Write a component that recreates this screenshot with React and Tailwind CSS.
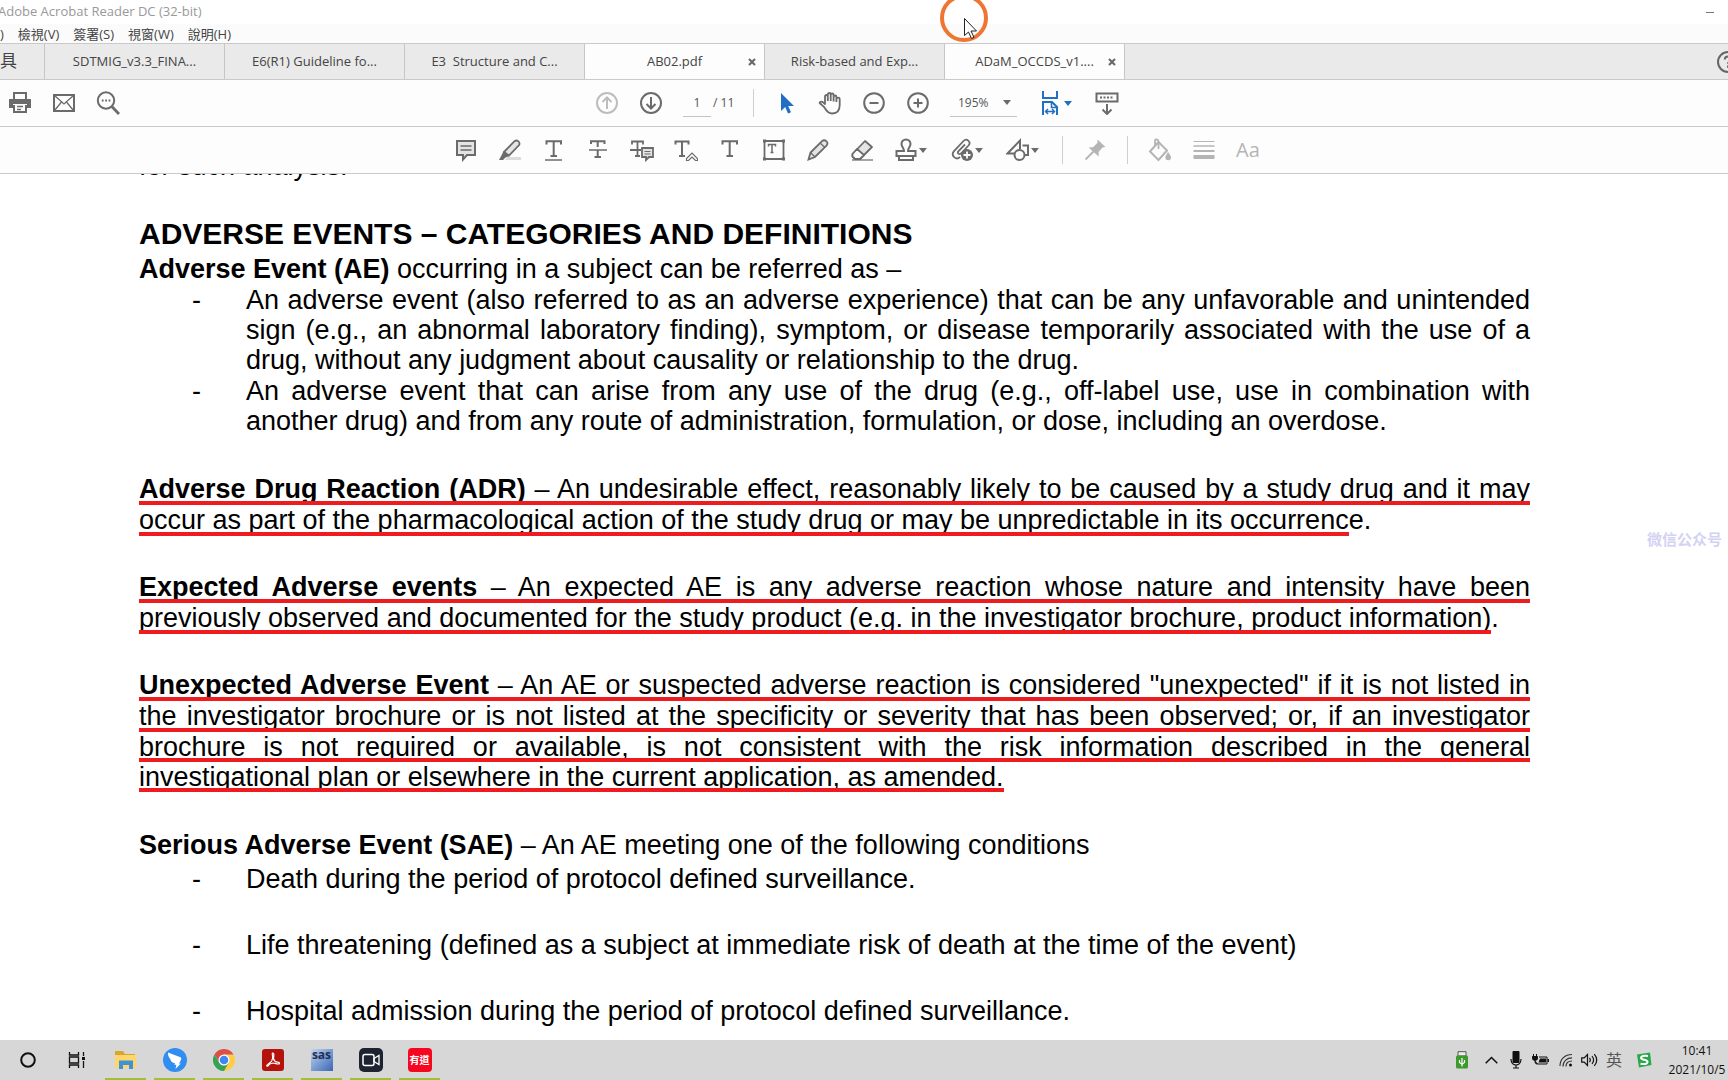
import React from "react";

const UI = "font-['Open_Sans','Noto_Sans_CJK_TC',sans-serif]";

function Icon({ children, className = "text-[#6b6b6b]", sw = 2 }) {
  return (
    <svg
      width="24"
      height="24"
      viewBox="0 0 24 24"
      fill="none"
      stroke="currentColor"
      strokeWidth={sw}
      className={`shrink-0 ${className}`}
      aria-hidden="true"
    >
      {children}
    </svg>
  );
}

function Caret({ className = "text-[#6b6b6b]" }) {
  return (
    <svg width="8" height="5" viewBox="0 0 8 5" className={`shrink-0 ${className}`} aria-hidden="true">
      <path d="M0 0h8L4 5z" fill="currentColor" />
    </svg>
  );
}

function Tool({ label, children }) {
  return (
    <button type="button" aria-label={label} className="flex h-11 w-11 items-center justify-center">
      {children}
    </button>
  );
}

function MenuTool({ label, children }) {
  return (
    <button type="button" aria-label={label} className="flex h-11 w-14 items-center gap-px pl-2.5">
      {children}
      <Caret />
    </button>
  );
}

function Divider({ className = "mx-2.5" }) {
  return <div className={`h-7 w-px bg-[#cfcfcf] ${className}`} />;
}

/* ---------- title, menu and tabs ---------- */

const menus = [")", "檢視(V)", "簽署(S)", "視窗(W)", "說明(H)"];

const tabs = [
  { name: "SDTMIG_v3.3_FINA..." },
  { name: "E6(R1) Guideline fo..." },
  { name: "E3\u00a0 Structure and C..." },
  { name: "AB02.pdf", active: true, close: true },
  { name: "Risk-based and Exp..." },
  { name: "ADaM_OCCDS_v1....", active: true, close: true },
];

function Tab({ name, active, close }) {
  return (
    <div
      className={`relative flex w-[180px] items-center justify-center border-l border-[#c6c6c6] ${
        active ? "bg-[#fdfdfd]" : ""
      }`}
    >
      <button type="button" className="whitespace-nowrap text-[13px] text-[#444]">
        {name}
      </button>
      {close && (
        <button type="button" aria-label={`Close ${name}`} className="absolute right-1 flex h-4 w-4 items-center justify-center">
          <svg width="8" height="8" viewBox="0 0 8 8" stroke="#666" strokeWidth="2" aria-hidden="true">
            <path d="M1 1l6 6M7 1L1 7" />
          </svg>
        </button>
      )}
    </div>
  );
}

function Header() {
  return (
    <header className={UI}>
      <div className="flex h-6 items-center justify-between bg-white pr-3">
        <h1 className="-ml-0.5 whitespace-nowrap text-[13px] text-[#999]">Adobe Acrobat Reader DC (32-bit)</h1>
        <button type="button" aria-label="Minimize" className="flex h-4 w-3 items-center justify-center">
          <span className="h-px w-2 bg-[#777]" />
        </button>
      </div>
      <nav className="flex h-[19px] items-center gap-3.5 bg-[#fbfbfb]">
        {menus.map((m) => (
          <button key={m} type="button" className="whitespace-nowrap text-[13px] leading-4 text-[#444]">
            {m}
          </button>
        ))}
      </nav>
      <div className="flex h-[37px] border-y border-[#cacaca] bg-[#eaeaea]">
        <button type="button" className="w-11 pb-0.5 text-left text-[17px] leading-8 text-[#444]">
          具
        </button>
        {tabs.map((t) => (
          <Tab key={t.name} {...t} />
        ))}
        <div className="flex flex-1 items-center justify-end overflow-hidden border-l border-[#c6c6c6]">
          <button type="button" aria-label="Help" className="-mr-3">
            <svg width="24" height="24" viewBox="0 0 24 24" fill="none" stroke="#666" strokeWidth="2" aria-hidden="true">
              <circle cx="12" cy="12" r="10" />
              <path d="M8.800 9.400c0-2 1.400-3 3.200-3s3.200 1.100 3.200 2.800c0 2.200-3.200 2.300-3.200 4.600M12 15.600v2.200" />
            </svg>
          </button>
        </div>
      </div>
    </header>
  );
}

/* ---------- toolbars ---------- */

const blue = "text-[#1f6fc4]";
const pale = "text-[#b4b4b4]";

function MainToolbar() {
  return (
    <div className={`flex h-[47px] items-center border-b border-[#cacaca] bg-[#fdfdfd] pr-3 ${UI}`}>
      <div className="-ml-0.5 flex flex-1">
        <Tool label="Print">
          <Icon>
            <path d="M6 8V2h12v6M6 14v7h12v-7" />
            <path d="M1 8h22v9h-4v-4H5v4H1z" fill="currentColor" stroke="none" />
            <path d="M9 15.500h6M9 18.500h4" strokeWidth="1.300" />
          </Icon>
        </Tool>
        <Tool label="Email">
          <Icon>
            <path d="M2 4h20v16H2z" />
            <path d="M2.500 4.500L12 13l9.500-8.500M2.500 19.500L9.500 11M21.500 19.500L14.500 11" strokeWidth="1.300" />
          </Icon>
        </Tool>
        <Tool label="Find">
          <Icon>
            <circle cx="10" cy="9.500" r="8.200" />
            <path d="M15.800 15.500L23 23" strokeWidth="2.800" />
            <path d="M5.800 9.500h8.600" strokeWidth="1.800" strokeDasharray="1.800 1.600" />
          </Icon>
        </Tool>
      </div>

      <div className="flex items-center">
        <Tool label="Previous page">
          <Icon className="text-[#bdbdbd]">
            <circle cx="12" cy="12" r="10" />
            <path d="M12 18V6.500M7.500 11L12 6.500l4.500 4.500" />
          </Icon>
        </Tool>
        <Tool label="Next page">
          <Icon>
            <circle cx="12" cy="12" r="10" />
            <path d="M12 6v11.500M7.500 13l4.500 4.500 4.500-4.500" />
          </Icon>
        </Tool>
        <input
          aria-label="Page number"
          defaultValue="1"
          className="ml-2.5 h-7 w-7 border-b border-[#c4c4c4] bg-transparent text-center text-xs text-[#555] outline-none"
        />
        <span className="ml-0.5 w-6 whitespace-nowrap text-xs text-[#555]">/ 11</span>
        <Divider className="ml-4 mr-2.5" />
        <Tool label="Select">
          <Icon className={blue}>
            <path d="M7 2v18l4.200-4 2.800 6.500 3-1.300-2.800-6.200H20z" fill="currentColor" stroke="none" />
          </Icon>
        </Tool>
        <Tool label="Hand">
          <Icon sw={1.8}>
            <path d="M6.500 16.500C4.500 14.500 2.600 13 1.600 11.800c.6-1.600 2.600-1.400 3.800-.2L7 13V5.500c0-2 2.800-2 2.800 0V10M9.800 10V3.500c0-2 2.900-2 2.900 0V10M12.700 10V4c0-2 2.900-2 2.900 0v6.500M15.600 10.500V6c0-2 2.800-2 2.800 0v3M18.400 11V8c0-1.900 3.300-1.900 3.300 0v6c0 5-2.500 8.500-7.500 8.500-4.200 0-5.800-2.500-7.700-6" strokeLinejoin="round" />
          </Icon>
        </Tool>
        <Tool label="Zoom out">
          <Icon>
            <circle cx="12" cy="12" r="9.800" />
            <path d="M7.500 12h9" />
          </Icon>
        </Tool>
        <Tool label="Zoom in">
          <Icon>
            <circle cx="12" cy="12" r="9.800" />
            <path d="M7.500 12h9M12 7.500v9" />
          </Icon>
        </Tool>
        <div className="ml-2.5 flex h-7 w-[67px] items-center border-b border-[#c4c4c4] pr-1.5">
          <select aria-label="Zoom level" className="w-full appearance-none bg-transparent pl-2 text-xs text-[#555] outline-none">
            <option>195%</option>
          </select>
          <Caret />
        </div>
        <button type="button" aria-label="Fit width" className="ml-3 flex h-11 w-12 items-center gap-px pl-2.5">
          <Icon className={blue}>
            <path d="M4 0v7h14V0" />
            <path d="M4 24V11h9l5 5v8" />
            <path d="M12.500 11v5.500H18" strokeWidth="1.500" />
            <path d="M6.500 20.500h9M9 18l-2.500 2.500L9 23M13 18l2.500 2.500L13 23" strokeWidth="1.500" />
          </Icon>
          <Caret className={blue} />
        </button>
        <div className="ml-2">
          <Tool label="Show toolbar below">
            <Icon>
              <path d="M1.500 2.500h21v8h-21z" />
              <path d="M5 6.500h14" strokeDasharray="2 1.500" strokeWidth="1.800" />
              <path d="M12 13v10M7.500 18.500L12 23l4.500-4.500" />
            </Icon>
          </Tool>
        </div>
      </div>
      <div className="flex-1" />
    </div>
  );
}

/* Serifed T shared by the text-markup tools */
const tee = "M4.500 6.500V3.200h14.500v3.300M11.700 3.200V18M8.500 18h6.500";

function CommentToolbar() {
  return (
    <div className={`flex h-[47px] items-center justify-center border-b border-[#cacaca] bg-[#fdfdfd] pr-3.5 ${UI}`}>
      <Tool label="Sticky note">
        <Icon>
          <path d="M3 3h18v14h-8l-4 4.500V17H3z" fill="#e4e4e4" />
          <path d="M6.500 8h11M6.500 12h11" strokeWidth="1.500" />
        </Icon>
      </Tool>
      <Tool label="Highlight">
        <Icon>
          <path d="M9 19h14v3H7z" fill="#dcdcdc" stroke="none" />
          <path d="M6 14L16.500 3.200c2.500-1.800 5.800.4 4.800 3.600L11 17.500z" fill="#e4e4e4" strokeWidth="1.800" />
          <path d="M5.500 13.500l6 4.500-4 1.500L5 22H1z" fill="currentColor" stroke="none" />
        </Icon>
      </Tool>
      <Tool label="Underline text">
        <Icon>
          <path d={tee} />
          <path d="M3 22h17" strokeWidth="1.500" />
        </Icon>
      </Tool>
      <Tool label="Strike through text">
        <Icon>
          <path d="M5 6V3.200h13.500V6M11.700 3.200V9M11.700 12v7M8.500 19h6.500" />
          <path d="M3 12h18" strokeWidth="1.500" />
        </Icon>
      </Tool>
      <Tool label="Replace text">
        <Icon>
          <path d="M2 6.500V3.500h11v3M7.500 3.500V18M5 18h5M0 12h11" strokeWidth="1.800" />
          <path d="M12 10h11v9h-4l-3 3v-3h-4z" fill="#e4e4e4" strokeWidth="1.800" />
          <path d="M14.500 13.500h6M14.500 16h6" strokeWidth="1" />
        </Icon>
      </Tool>
      <Tool label="Insert text">
        <Icon>
          <path d="M1.500 6.500V3.500h13v3M8 3.500V18M5 18h6" />
          <path d="M12.500 22.500v-2L18 15l5.500 5.500v2h-2L18 19l-3.500 3.500z" strokeWidth="1.200" />
        </Icon>
      </Tool>
      <Tool label="Add text">
        <Icon>
          <path d={tee} />
        </Icon>
      </Tool>
      <Tool label="Text box">
        <Icon>
          <path d="M2.500 3h19v18h-19z" strokeWidth="1.800" />
          <path d="M1 1.500h3v3H1zM20 1.500h3v3h-3zM1 19.500h3v3H1zM20 19.500h3v3h-3z" fill="currentColor" stroke="none" />
          <path d="M6.500 8.500V6.500h7v2M10 6.500v8M8.500 14.500h3" strokeWidth="1.500" />
        </Icon>
      </Tool>
      <Tool label="Pencil">
        <Icon sw={1.8}>
          <path d="M2.500 21.500l2-7L16 3.200c1.500-1.400 3-1.200 4.300 0 1.400 1.400 1.500 3 .2 4.400L9 19z" fill="#e4e4e4" />
          <path d="M14 5l5 4.500M4.500 14.500L9 19" strokeWidth="1.300" />
        </Icon>
      </Tool>
      <Tool label="Eraser">
        <Icon sw={1.8}>
          <path d="M2.500 16L15 3l7 6L10 21H5l-2.500-2.500z" fill="#e4e4e4" strokeLinejoin="round" />
          <path d="M2.500 16L7 11l7 6-4 4H5l-2.500-2.500z" fill="#fdfdfd" strokeLinejoin="round" />
          <path d="M2 22h21" strokeWidth="1.200" />
        </Icon>
      </Tool>
      <MenuTool label="Stamp">
        <Icon>
          <path d="M10 13c.2-3-2.500-4-2.500-7a4.500 4.500 0 019 0c0 3-2.700 4-2.500 7h7.500v5h-19v-5z" />
          <path d="M5 18v4h14v-4" />
        </Icon>
      </MenuTool>
      <MenuTool label="Attach file">
        <Icon>
          <path d="M10 19c-2 1.800-4.500 1.600-6 0-1.700-1.700-1.500-4 0-5.800L13.500 3c1.500-1.600 3.600-1.500 5-.2s1.300 3.200 0 4.700L11 15.500c-2 1.500-4-.4-2.700-2.200L15 6.500" strokeWidth="1.800" />
          <circle cx="17" cy="17" r="6" fill="currentColor" stroke="none" />
          <path d="M17 13.500v7M13.500 17h7" stroke="#fff" strokeWidth="1.800" />
        </Icon>
      </MenuTool>
      <MenuTool label="Drawing tools">
        <Icon>
          <path d="M8 15.500H1.500L14 2.500V11M16.500 7.500H22v9.500h-3" />
          <circle cx="13.500" cy="17" r="5" />
        </Icon>
      </MenuTool>
      <Divider />
      <Tool label="Keep tool selected">
        <Icon className={pale}>
          <path d="M14.500 1.500L22.500 9l-3 .5-4 4.500.3 4.500L5.500 9.500l4.500-.3 4.500-4.500z" fill="currentColor" stroke="none" />
          <path d="M10.500 13.500L2.500 21.500" strokeWidth="1.800" />
        </Icon>
      </Tool>
      <Divider />
      <Tool label="Fill color">
        <Icon className={pale}>
          <path d="M2 13.500L10.500 4l8.500 8.500L10.500 22z" />
          <path d="M7 8V2.500c0-1.500 3.500-1.500 3.500 1V11" strokeWidth="1.800" />
          <path d="M20 14c2 2.500 3 4 3 5.500a2.800 2.800 0 01-5.600 0c0-1.500 1-3 2.600-5.500z" fill="currentColor" stroke="none" />
        </Icon>
      </Tool>
      <Tool label="Line thickness">
        <Icon className={pale}>
          <path d="M1.500 3.500h21" strokeWidth="1" />
          <path d="M1.500 8h21" strokeWidth="1.500" />
          <path d="M1.500 13h21" strokeWidth="2" />
          <path d="M1.500 19h21" strokeWidth="4" />
        </Icon>
      </Tool>
      <button type="button" aria-label="Text properties" className="h-11 w-11 text-xl leading-none text-[#b4b4b4]">
        Aa
      </button>
    </div>
  );
}

/* ---------- document ---------- */

/* One line of marked text: the red rule covers the descenders. */
function Marked({ children, fill, tight, rest }) {
  const line = (
    <span
      className={`block overflow-hidden whitespace-nowrap border-b-4 border-[#ee1c1f] ${tight ? "h-[30px]" : "h-[31px]"} ${
        fill ? "w-full text-justify [text-align-last:justify]" : ""
      }`}
    >
      {children}
    </span>
  );
  return (
    <span className="flex">
      {line}
      {rest && <span>{rest}</span>}
    </span>
  );
}

function Bullet({ children, className = "" }) {
  return (
    <li className={`flex ${className}`}>
      <span className="w-[54px] shrink-0">-</span>
      <span className="flex-1 text-justify">{children}</span>
    </li>
  );
}

function Document() {
  return (
    <main className="relative flex-1 overflow-hidden bg-white font-['Liberation_Sans',Arial,sans-serif] text-[27px] leading-[30px] text-black">
      <article className="-mt-[23px] ml-[139px] mr-[198px]">
        <p>for such analysis.</p>
        <h2 className="mb-0.5 mt-[35px] text-[30px] font-bold leading-9">ADVERSE EVENTS – CATEGORIES AND DEFINITIONS</h2>
        <p className="leading-[31px]">
          <b>Adverse Event (AE)</b> occurring in a subject can be referred as –
        </p>
        <ul className="ml-[53px]">
          <Bullet>
            An adverse event (also referred to as an adverse experience) that can be any unfavorable and unintended sign
            (e.g., an abnormal laboratory finding), symptom, or disease temporarily associated with the use of a drug,
            without any judgment about causality or relationship to the drug.
          </Bullet>
          <Bullet className="mt-px">
            An adverse event that can arise from any use of the drug (e.g., off-label use, use in combination with another
            drug) and from any route of administration, formulation, or dose, including an overdose.
          </Bullet>
        </ul>
        <p className="mt-[38px]">
          <Marked fill>
            <b>Adverse Drug Reaction (ADR)</b> – An undesirable effect, reasonably likely to be caused by a study drug and
            it may
          </Marked>
          <Marked rest="e.">
            occur as part of the pharmacological action of the study drug or may be unpredictable in its occurrenc
          </Marked>
        </p>
        <p className="mt-9">
          <Marked fill>
            <b>Expected Adverse events</b> – An expected AE is any adverse reaction whose nature and intensity have been
          </Marked>
          <Marked rest=".">
            previously observed and documented for the study product (e.g. in the investigator brochure, product
            information)
          </Marked>
        </p>
        <p className="mt-9">
          <Marked fill>
            <b>Unexpected Adverse Event</b> – An AE or suspected adverse reaction is considered "unexpected" if it is not
            listed in
          </Marked>
          <Marked fill>
            the investigator brochure or is not listed at the specificity or severity that has been observed; or, if an
            investigator
          </Marked>
          <Marked fill tight>
            brochure is not required or available, is not consistent with the risk information described in the general
          </Marked>
          <Marked tight>investigational plan or elsewhere in the current application, as amended.</Marked>
        </p>
        <p className="mt-[38px]">
          <b>Serious Adverse Event (SAE)</b> – An AE meeting one of the following conditions
        </p>
        <ul className="ml-[53px] mt-1 flex flex-col gap-9">
          <Bullet>Death during the period of protocol defined surveillance.</Bullet>
          <Bullet>Life threatening (defined as a subject at immediate risk of death at the time of the event)</Bullet>
          <Bullet>Hospital admission during the period of protocol defined surveillance.</Bullet>
        </ul>
      </article>
      <span className="absolute right-1.5 top-[354px] font-['Noto_Sans_CJK_SC',sans-serif] text-[15px] font-bold leading-[22px] text-[#d3d2f3]">
        微信公众号
      </span>
    </main>
  );
}

/* ---------- taskbar ---------- */

function TaskButton({ label, running, children }) {
  return (
    <button type="button" aria-label={label} className="relative flex h-10 w-[49px] items-center justify-center">
      {children}
      {running && <span className="absolute inset-x-1 bottom-0 h-0.5 bg-[#a2c037]" />}
    </button>
  );
}

function Taskbar() {
  return (
    <footer className={`flex h-10 items-center justify-between bg-[#d7d7d7] ${UI}`}>
      <div className="flex items-center pl-[3px]">
        <TaskButton label="Cortana">
          <svg width="16" height="16" viewBox="0 0 16 16" fill="none" stroke="#111" strokeWidth="2" aria-hidden="true">
            <circle cx="8" cy="8" r="6.800" />
          </svg>
        </TaskButton>
        <TaskButton label="Task view">
          <svg width="18" height="16" viewBox="0 0 18 16" fill="none" stroke="#111" strokeWidth="1.300" aria-hidden="true">
            <path d="M1.500 0v3h9V0M1.500 16v-3h9v3M1.500 5h9v6h-9zM15.500 0v4M15.500 9v7" />
            <path d="M14 5h3v3h-3z" fill="#111" stroke="none" />
          </svg>
        </TaskButton>
        <TaskButton label="File Explorer" running>
          <svg width="24" height="24" viewBox="0 0 24 24" aria-hidden="true">
            <path d="M1 3h8l2 3h10v14H1z" fill="#d9a72c" />
            <path d="M1 7h21v13H1z" fill="#ffd66b" />
            <path d="M5 21v-8.500h14V21h-4v-4h-6v4z" fill="#3f93d3" />
          </svg>
        </TaskButton>
        <TaskButton label="DingTalk" running>
          <svg width="24" height="24" viewBox="0 0 24 24" aria-hidden="true">
            <circle cx="12" cy="12" r="12" fill="#2f8ef0" />
            <path d="M5 4.500l12.500 4.800c1.500.8.600 2.500-.200 4l-1.300 2.200h1.800L12.500 21l.8-4.200h-2l.8-1.600C8.500 14.500 7.500 12.500 7.300 11c-1.500-1.500-2.500-4-2.300-6.500z" fill="#fff" />
          </svg>
        </TaskButton>
        <TaskButton label="Chrome" running>
          <svg width="22" height="22" viewBox="0 0 24 24" aria-hidden="true">
            <path d="M12 12V24A12 12 0 0022.400 6H12z" fill="#ffcd46" />
            <path d="M12 6h10.400A12 12 0 001.600 6l5.200 9z" fill="#dd5144" />
            <path d="M1.600 6A12 12 0 0012 24l5.200-9H6.800z" fill="#34a353" />
            <circle cx="12" cy="12" r="6" fill="#fff" />
            <circle cx="12" cy="12" r="4.700" fill="#4285f4" />
          </svg>
        </TaskButton>
        <TaskButton label="Acrobat Reader" running>
          <svg width="22" height="22" viewBox="0 0 22 22" aria-hidden="true">
            <rect width="22" height="22" rx="3" fill="#b3130b" />
            <path d="M10.600 4c1.600-.3 1.400 3 .8 5.500C12 11.500 14 13 15.500 13.200c2 0 3 1.800.8 1.800-2 0-4-.9-5.300-1-1.800.2-3.600.9-4.800 2.600-1 1.400-2.200.3-.7-1C7 14 8.800 13.500 9.700 12c1-2 1.200-3.800.8-5.300-.3-1-.4-2.500.1-2.700z" fill="none" stroke="#fff" strokeWidth="1.200" />
          </svg>
        </TaskButton>
        <TaskButton label="SAS" running>
          <span className="flex h-[22px] w-[22px] items-start justify-center bg-linear-to-br from-[#c3d6ee] to-[#3a66b4] text-xs font-bold leading-3 text-[#1f2f55]">
            sas
          </span>
        </TaskButton>
        <TaskButton label="Screen recorder" running>
          <svg width="24" height="24" viewBox="0 0 24 24" aria-hidden="true">
            <rect width="24" height="24" rx="5" fill="#1d2330" />
            <rect x="4" y="6.500" width="11" height="11" rx="2" fill="none" stroke="#fff" strokeWidth="1.500" />
            <path d="M15 10.500L20 7.500v9l-5-3z" fill="none" stroke="#fff" strokeWidth="1.300" />
          </svg>
        </TaskButton>
        <TaskButton label="Youdao" running>
          <span className="flex h-6 w-6 items-center justify-center rounded-[4px] bg-[#f5071f] text-[10px] font-bold text-white">
            有道
          </span>
        </TaskButton>
      </div>

      <div className="flex h-full shrink-0 items-center">
        <div className="flex items-center pr-2.5">
          <button type="button" aria-label="Safely remove hardware" className="mr-4">
            <svg width="14" height="18" viewBox="0 0 14 18" aria-hidden="true">
              <path d="M3 .700h8V5H3z" fill="#eee" stroke="#555" />
              <rect x="1" y="4.500" width="12" height="13" rx="1.500" fill="#3c9b2c" />
              <path d="M7 15.500V7M4.500 9v2.500L7 13.300M9.500 9v2.500L7 13.300" fill="none" stroke="#fff" strokeWidth="1.200" />
            </svg>
          </button>
          <button type="button" aria-label="Show hidden icons" className="mr-3">
            <svg width="13" height="8" viewBox="0 0 13 8" fill="none" stroke="#111" strokeWidth="1.500" aria-hidden="true">
              <path d="M.700 7.300L6.500 1.500l5.800 5.800" />
            </svg>
          </button>
          <button type="button" aria-label="Microphone" className="mr-2.5">
            <svg width="12" height="18" viewBox="0 0 12 18" aria-hidden="true">
              <rect x="2.500" y="0" width="7" height="12" rx="1" fill="#111" />
              <path d="M1 8c0 8 10 8 10 0M6 14v3M3 17h6" fill="none" stroke="#111" strokeWidth="1.200" />
            </svg>
          </button>
          <button type="button" aria-label="Battery" className="mr-2.5">
            <svg width="17" height="12" viewBox="0 0 17 12" aria-hidden="true">
              <path d="M7 3h8v7H6" fill="none" stroke="#111" />
              <path d="M8 4.500h6v4H6.500zM15.500 5h1.500v3h-1.500z" fill="#111" />
              <path d="M.500 2.500h5v2c0 2.500-5 2.500-5 0zM1.500 0v2.500M4.500 0v2.500M3 6.500c0 3.500 1 3.500 3 3.500" fill="#111" stroke="#111" />
            </svg>
          </button>
          <button type="button" aria-label="Wi-Fi" className="mr-2">
            <svg width="14" height="14" viewBox="0 0 14 14" fill="none" stroke="#333" strokeWidth="1.200" aria-hidden="true">
              <path d="M1 13C1 6 6 1.500 13 1.500M4 13.500C4 8 8 4.800 13 4.800M7 13.500C7 10 9.500 8 13 8" />
              <circle cx="11.500" cy="12" r="1.500" fill="#111" stroke="none" />
            </svg>
          </button>
          <button type="button" aria-label="Volume" className="mr-2">
            <svg width="17" height="14" viewBox="0 0 17 14" fill="none" stroke="#111" strokeWidth="1.200" aria-hidden="true">
              <path d="M.700 4.800h2.500L6.500 1.500v11L3.200 9.200H.700z" />
              <path d="M8.500 4.800c1 1.400 1 3 0 4.400M11 3c2 2.500 2 5.500 0 8M13.300 1.200c3 3.500 3 8 0 11.600" />
            </svg>
          </button>
          <button type="button" className="mr-3.5 text-base leading-6 text-[#555]">
            英
          </button>
          <button type="button" aria-label="Sogou input">
            <svg width="16" height="16" viewBox="0 0 16 16" aria-hidden="true">
              <path d="M1 2.500L14 .500 15.500 13 3 15.500z" fill="#27a84a" />
              <path d="M12 4C8 3.500 5 4 5 6s6.500 1.500 6.500 3.800S8 12.500 4.500 11.800" fill="none" stroke="#fff" strokeWidth="2" />
            </svg>
          </button>
        </div>
        <button type="button" className="flex w-[66px] flex-col items-center whitespace-nowrap pl-1 text-xs leading-[19px] text-[#111]">
          <span>10:41</span>
          <span>2021/10/5</span>
        </button>
      </div>
    </footer>
  );
}

export default function App() {
  return (
    <div className="relative flex h-screen flex-col overflow-hidden bg-white">
      <Header />
      <MainToolbar />
      <CommentToolbar />
      <Document />
      <Taskbar />
      <svg
        width="50"
        height="50"
        viewBox="0 0 50 50"
        fill="none"
        className="pointer-events-none absolute -top-[7px] left-[939px]"
        aria-hidden="true"
      >
        <circle cx="25" cy="25" r="22" stroke="#ee7632" strokeWidth="4" />
        <path d="M25.500 25.500v17l4-3.500 3 6.500 2.500-1.200-3-6.300h5.500z" fill="#fff" stroke="#222" strokeWidth="1" />
      </svg>
    </div>
  );
}
